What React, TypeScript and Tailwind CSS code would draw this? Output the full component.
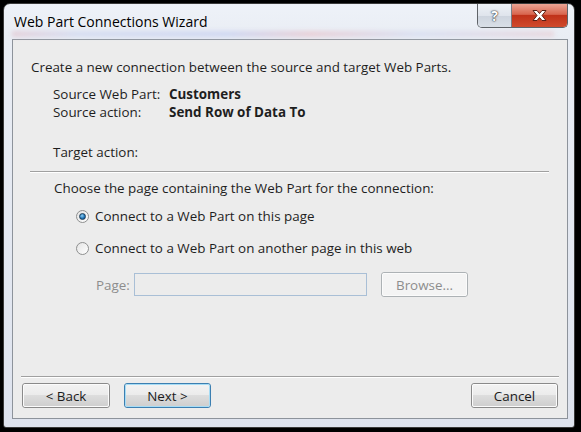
import React from "react";

const font = { fontFamily: '"Open Sans", "Noto Sans", sans-serif' };

function WinButton({ label, primary, disabled, className }: { label: string; primary?: boolean; disabled?: boolean; className?: string }) {
  return (
    <div
      className={
        "relative flex items-center justify-center rounded-[3px] border text-[13.4px] " +
        (primary ? "border-[#3c7fb1] " : "border-[#8a8a8a] ") +
        (disabled ? "border-[#adb2b5] text-[#8d8d8d] " : "text-[#1b1b1b] ") +
        (className ?? "")
      }
    >
      <div
        className={
          "absolute inset-0 rounded-[2px] border " +
          (primary ? "border-[#a6dcf5] " : "border-[#fbfbfb] ") +
          (disabled
            ? "bg-[#f4f4f4]"
            : "bg-[linear-gradient(#f2f2f2_0%,#ebebeb_50%,#dddddd_50%,#cfcfcf_100%)]")
        }
      />
      <span className="relative">{label}</span>
    </div>
  );
}

function Radio({ checked }: { checked?: boolean }) {
  return (
    <div className="flex h-[13px] w-[13px] items-center justify-center rounded-full border border-[#8e8f8f] bg-[linear-gradient(135deg,#e4e4e4,#ffffff)]">
      {checked && (
        <div className="h-[7px] w-[7px] rounded-full border border-[#1d3d58] bg-[radial-gradient(circle_at_40%_35%,#8fd0f5,#1a6fb3_60%,#0d4a7d)]" />
      )}
    </div>
  );
}

export default function App() {
  return (
    <div className="h-[432px] w-[581px] bg-black pl-[3px] pt-[3px]" style={font}>
      <div className="flex h-[425px] w-[572px] flex-col rounded-t-[7px] rounded-b-[3px] border border-[#3b3b3b] bg-[linear-gradient(180deg,#eef2f8_0%,#e9edf4_8%,#dee3ee_100%)]">
        {/* title bar */}
        <div className="relative flex h-[35px] shrink-0 items-start">
          <div className="pointer-events-none absolute left-[8px] right-[20px] top-[27px] h-[6px] bg-[linear-gradient(90deg,#e3c6d0_0%,#cfd7f0_12%,#c6cff0_40%,#e8c4cc_55%,#d5dcf1_75%,#e8d0d6_100%)] opacity-70 blur-[2px]" />
          <div className="relative mt-[8px] ml-[10px] text-[14px] leading-[20px] text-black">
            Web Part Connections Wizard
          </div>
          <div className="relative ml-auto mr-[6px] flex h-[24px] overflow-hidden rounded-b-[5px] border border-t-0 border-[#5f6368]">
            <div className="flex w-[34px] items-center justify-center border-r border-[#7a7f87] bg-[linear-gradient(#eef2f7_0%,#dfe4ec_50%,#cdd4de_51%,#d9dfe7_100%)] text-[14px] font-bold text-white [text-shadow:0_0_2px_#333,0_0_1px_#000]">
              ?
            </div>
            <div className="flex w-[55px] items-center justify-center bg-[linear-gradient(#eba494_0%,#d8654e_45%,#c0321a_50%,#d04a2c_100%)]">
              <svg width="17" height="13" viewBox="0 0 17 13">
                <path d="M2 1.5h4L8.5 4.5l2.5-3h4L11 6.5l4 5h-4L8.5 8.5 6 11.5H2l4-5z" fill="#fff" stroke="#5a1f14" strokeWidth="1" strokeLinejoin="round" />
              </svg>
            </div>
          </div>
        </div>

        {/* client panel */}
        <div className="mx-[8px] flex flex-1 flex-col border border-[#8d939b] bg-[#ececec] text-[13.4px] leading-[18px] text-[#1e1e1e] mb-[8px] mr-[6px]">
          <div className="mt-[18px] pl-[18px]">Create a new connection between the source and target Web Parts.</div>

          <div className="mt-[9px] pl-[40px]">
            <div className="flex">
              <div className="w-[116px]">Source Web Part:</div>
              <div className="font-bold">Customers</div>
            </div>
            <div className="flex">
              <div className="w-[116px]">Source action:</div>
              <div className="font-bold">Send Row of Data To</div>
            </div>
            <div className="mt-[22px]">Target action:</div>
          </div>

          <div className="ml-[17px] mr-[18px] mt-[10px] h-px bg-[#a0a0a0] shadow-[0_1px_0_#fff]" />

          <div className="mt-[7px] pl-[41px]">Choose the page containing the Web Part for the connection:</div>

          <div className="mt-[10px] flex items-center gap-[6px] pl-[63px]">
            <Radio checked />
            <span>Connect to a Web Part on this page</span>
          </div>
          <div className="mt-[14px] flex items-center gap-[6px] pl-[63px]">
            <Radio />
            <span>Connect to a Web Part on another page in this web</span>
          </div>

          <div className="mt-[15px] flex items-center pl-[83px]">
            <span className="w-[38px] text-[#8d8d8d]">Page:</span>
            <div className="h-[23px] w-[233px] border border-[#a9bfd6] bg-[#ececec]" />
            <WinButton label="Browse..." disabled className="ml-[14px] h-[25px] w-[87px]" />
          </div>

          <div className="mt-auto">
            <div className="mx-[8px] h-px bg-[#a0a0a0] shadow-[0_1px_0_#fff]" />
            <div className="mb-[10px] mt-[6px] flex px-[9px]">
              <WinButton label="< Back" className="h-[25px] w-[88px]" />
              <WinButton label="Next >" primary className="ml-[14px] h-[25px] w-[87px]" />
              <WinButton label="Cancel" className="ml-auto h-[25px] w-[87px]" />
            </div>
          </div>
        </div>
      </div>
    </div>
  );
}
